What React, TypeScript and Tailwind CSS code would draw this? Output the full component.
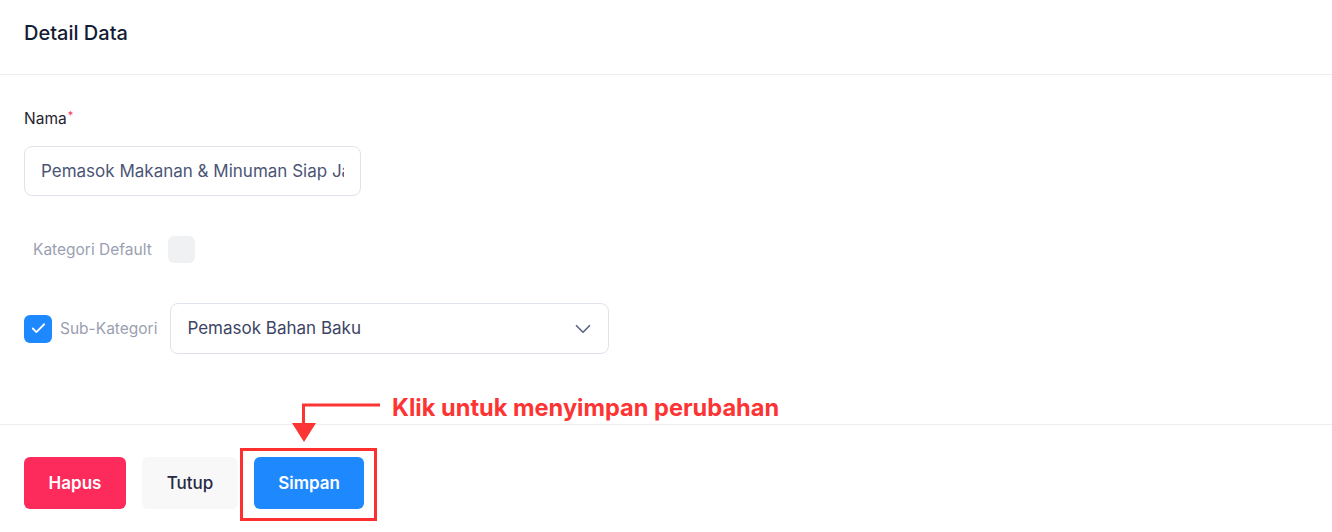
import { Check, ChevronDown } from 'lucide-react';

export default function App() {
  return (
    <div className="relative h-[532px] w-[1332px] overflow-hidden bg-white font-['Inter',sans-serif]">
      <div className="border-b border-[#eceef1] px-6 pb-[27px] pt-[19px]">
        <h2 className="text-[20px] font-medium leading-7 text-[#141b34]">Detail Data</h2>
      </div>

      <div className="px-6 pb-[70px] pt-[34px]">
        <label className="block text-[15.5px] leading-5 text-[#1f2430]">
          Nama<sup className="ml-[1px] text-[11px] text-[#f5365c]">*</sup>
        </label>
        <input
          readOnly
          value="Pemasok Makanan & Minuman Siap Jadi"
          className="mt-[17px] h-[50px] w-[337px] rounded-lg border border-[#dfe3ec] px-4 text-[17px] text-[#4b5576] outline-none"
        />

        <div className="mt-10 flex items-center pl-[9px]">
          <span className="text-[15.5px] text-[#9aa0b1]">Kategori Default</span>
          <span className="ml-4 h-[27px] w-[27px] rounded-md bg-[#f0f1f3]" />
        </div>

        <div className="mt-10 flex items-center">
          <span className="flex h-[28px] w-[28px] items-center justify-center rounded-md bg-[#1e88ff]">
            <Check size={17} strokeWidth={2.5} className="text-white" />
          </span>
          <span className="ml-2 text-[15.5px] text-[#9aa0b1]">Sub-Kategori</span>
          <div className="ml-[13px] flex h-[51px] w-[439px] items-center justify-between rounded-lg border border-[#dfe3ec] pl-4 pr-3">
            <span className="text-[17px] text-[#3d4566]">Pemasok Bahan Baku</span>
            <ChevronDown size={26} strokeWidth={1.6} className="text-[#5f6787]" />
          </div>
        </div>
      </div>

      <div className="flex gap-4 border-t border-[#eceef1] px-6 pt-8">
        <button className="h-[52px] w-[102px] rounded-md bg-[#fd2a5c] pt-[2px] text-[17px] font-semibold text-white">Hapus</button>
        <button className="h-[52px] w-[96px] rounded-md bg-[#f8f8f9] pt-[2px] text-[17px] font-medium text-[#262b45]">Tutup</button>
        <button className="h-[52px] w-[110px] rounded-md bg-[#1e88ff] pt-[2px] text-[17px] font-semibold text-white">Simpan</button>
      </div>

      {/* annotation overlay */}
      <svg className="absolute left-0 top-0" width="400" height="450" viewBox="0 0 400 450">
        <path d="M380 405 H303.5 V424" fill="none" stroke="#fd3434" strokeWidth="3" />
        <polygon points="292,423 316,423 304,442" fill="#fd3434" />
      </svg>
      <span className="absolute left-[392px] top-[394px] whitespace-nowrap text-[23.6px] font-bold leading-7 text-[#fd3434]">
        Klik untuk menyimpan perubahan
      </span>
      <div className="absolute left-[240px] top-[448px] h-[73px] w-[137px] border-[3px] border-[#fd2f2f]" />
    </div>
  );
}
